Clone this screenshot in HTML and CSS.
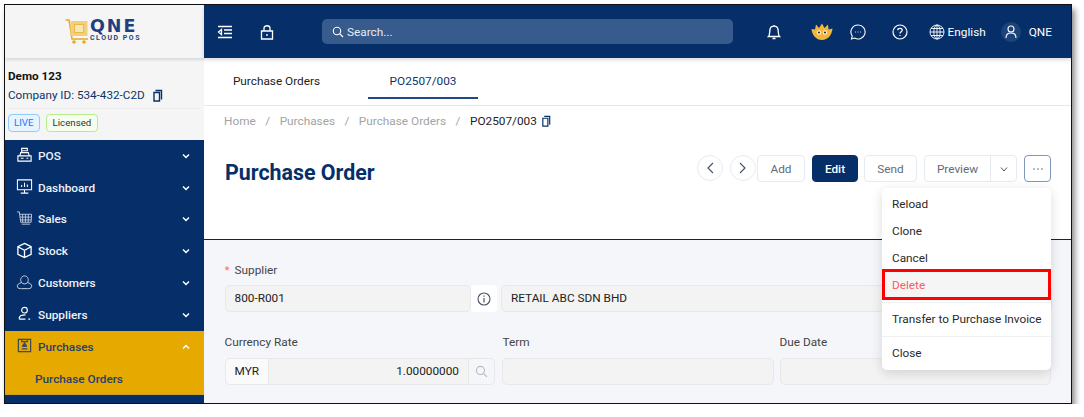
FILE: index.html
```html
<!DOCTYPE html>
<html>
<head>
    <title>Purchase Order</title>
    <link rel="stylesheet" href="styles.css">
</head>
<body>
<div class="frame">
    <div class="sidebar">
        <div class="logo-box">
            <svg class="logo-cart" width="24" height="25" viewBox="0 0 24 25">
                <path d="M0.500 1H4L7 20H23" fill="none" stroke="#e9a91e" stroke-width="1.500"/>
                <rect x="5.500" y="2" width="17" height="15" fill="#f3cf7c"/>
                <rect x="9.500" y="5.500" width="9" height="8" fill="#f9e6b5" stroke="#e9b84a"/>
                <circle cx="9" cy="23" r="1.800" fill="#e9a91e"/>
                <circle cx="19" cy="23" r="1.800" fill="#e9a91e"/>
            </svg>
            <div class="logo-text">
                <div class="logo-qne">QNE</div>
                <div class="logo-sub">CLOUD POS</div>
            </div>
        </div>
        <div class="company">
            <div class="company-name">Demo 123</div>
            <div class="company-id">
                Company ID: 534-432-C2D
                <svg width="12" height="13" viewBox="0 0 12 13"><path d="M3.500 1.500H9.500V10.500M3 3.500H7.500V12H2V3.500Z" fill="none" stroke="#0a3069" stroke-width="1.400"/></svg>
            </div>
            <div class="badges">
                <span class="badge badge-live">LIVE</span>
                <span class="badge badge-lic">Licensed</span>
            </div>
        </div>
        <div class="menu">
            <div class="menu-item">
                <svg class="mi" viewBox="0 0 18 18"><path d="M2 16V10.500H16V16ZM4 10.500L5 7H13L14 10.500M6 7V2.500H12V5H6M5 13H8M11 13H13" fill="none" stroke="#fff" stroke-width="1.200"/></svg>
                <span>POS</span>
                <svg class="chev" viewBox="0 0 10 10"><path d="M2 3.500L5 6.500L8 3.500" fill="none" stroke="#fff" stroke-width="1.500"/></svg>
            </div>
            <div class="menu-item">
                <svg class="mi" viewBox="0 0 18 18"><path d="M1.500 2H16.500V12.500H1.500ZM9 12.500V16M5 16H13M6 9.500V7.500M9 9.500V5M12 9.500V7" fill="none" stroke="#fff" stroke-width="1.100"/></svg>
                <span>Dashboard</span>
                <svg class="chev" viewBox="0 0 10 10"><path d="M2 3.500L5 6.500L8 3.500" fill="none" stroke="#fff" stroke-width="1.500"/></svg>
            </div>
            <div class="menu-item">
                <svg class="mi" viewBox="0 0 18 18"><path d="M1 2H3.500L5 13H16L16.500 4.500H3.800M7 4.500V13M10 4.500V13M13 4.500V13M4.200 7.500H16.300M4.600 10.500H16.200M6 15H15" fill="none" stroke="#cfd8e6" stroke-width="0.900"/></svg>
                <span>Sales</span>
                <svg class="chev" viewBox="0 0 10 10"><path d="M2 3.500L5 6.500L8 3.500" fill="none" stroke="#fff" stroke-width="1.500"/></svg>
            </div>
            <div class="menu-item">
                <svg class="mi" viewBox="0 0 18 18"><path d="M9 1.500L16 5V13L9 16.500L2 13V5ZM2 5L9 8.800L16 5M9 8.800V16.500" fill="none" stroke="#fff" stroke-width="1.400"/></svg>
                <span>Stock</span>
                <svg class="chev" viewBox="0 0 10 10"><path d="M2 3.500L5 6.500L8 3.500" fill="none" stroke="#fff" stroke-width="1.500"/></svg>
            </div>
            <div class="menu-item">
                <svg class="mi" viewBox="0 0 18 18"><path d="M6 9C4 7 5 2 9 2S14 7 12 9M6 9C3 10 1 11 1.500 13.500C2 15.500 4 15.500 6 15.500H12C14 15.500 16 15.500 16.500 13.500C17 11 15 10 12 9M6 9C7 11 11 11 12 9" fill="none" stroke="#cfd8e6" stroke-width="1"/></svg>
                <span>Customers</span>
                <svg class="chev" viewBox="0 0 10 10"><path d="M2 3.500L5 6.500L8 3.500" fill="none" stroke="#fff" stroke-width="1.500"/></svg>
            </div>
            <div class="menu-item">
                <svg class="mi" viewBox="0 0 18 18"><circle cx="9" cy="5.500" r="3" fill="none" stroke="#fff" stroke-width="1.200"/><path d="M3.500 15V13.500C4 11.500 7 10.500 10 10.500M3.500 15H10M13 15H15" fill="none" stroke="#fff" stroke-width="1.200"/></svg>
                <span>Suppliers</span>
                <svg class="chev" viewBox="0 0 10 10"><path d="M2 3.500L5 6.500L8 3.500" fill="none" stroke="#fff" stroke-width="1.500"/></svg>
            </div>
            <div class="menu-open">
                <div class="menu-item menu-item-open">
                    <svg class="mi" viewBox="0 0 18 18"><path d="M2.500 2.500H15.500V15.500H2.500ZM6 2.500V5H12V2.500M6 12.500H12M6.500 10H11.500M9 6.500L7.500 8.500H10.500Z" fill="none" stroke="#3d4a5c" stroke-width="1.300"/></svg>
                    <span>Purchases</span>
                    <svg class="chev" viewBox="0 0 10 10"><path d="M2 6.500L5 3.500L8 6.500" fill="none" stroke="#fff" stroke-width="1.500"/></svg>
                </div>
                <div class="submenu-item">Purchase Orders</div>
            </div>
        </div>
    </div>

    <div class="main">
        <div class="topbar">
            <svg width="16" height="16" viewBox="0 0 16 16"><path d="M1 2.500H15M7 6H15M7 9.500H15M1 13.500H15M4.500 5.500L1.500 8L4.500 10.500Z" fill="none" stroke="#fff" stroke-width="1.300"/></svg>
            <svg class="lock" width="16" height="16" viewBox="0 0 16 16"><path d="M2.500 7H13.500V15H2.500ZM5 7V4C5 1 11 1 11 4V7M8 10V12" fill="none" stroke="#fff" stroke-width="1.300"/></svg>
            <div class="search">
                <svg width="12" height="12" viewBox="0 0 12 12"><circle cx="5" cy="5" r="3.700" fill="none" stroke="#fff" stroke-width="1.100"/><path d="M8 8L11 11" stroke="#fff" stroke-width="1.100"/></svg>
                <span>Search...</span>
            </div>
            <div class="top-right">
                <svg class="t-bell" width="14" height="16" viewBox="0 0 14 16"><path d="M1.500 12.500C3 11 2.500 8 3 5.500C3.500 1 10.500 1 11 5.500C11.500 8 11 11 12.500 12.500ZM5.500 14.500H8.500M7 1V2" fill="none" stroke="#fff" stroke-width="1.300"/></svg>
                <svg class="t-crown" width="22" height="18" viewBox="0 0 22 18"><path d="M0.500 6L4 6.500L5 1.500L8 5L11 0.500L13.500 5L17 1.500L17.500 6.500L21.500 5.500C21 12 17 17 11 17C5 17 1 12 0.500 6Z" fill="#f4b63a"/><circle cx="8" cy="9.500" r="2.200" fill="#fff2c8"/><circle cx="14" cy="9.500" r="2.200" fill="#fff2c8"/><circle cx="8" cy="9.500" r="1.100" fill="#333"/><circle cx="14" cy="9.500" r="1.100" fill="#333"/></svg>
                <svg class="t-chat" width="16" height="16" viewBox="0 0 16 16"><path d="M8 1A7 7 0 1 1 4.500 14L1.500 15L2.200 12A7 7 0 0 1 8 1Z" fill="none" stroke="#fff" stroke-width="1.100"/><path d="M5 8H5.800M7.600 8H8.400M10.200 8H11" stroke="#fff" stroke-width="1.100"/></svg>
                <svg class="t-help" width="16" height="16" viewBox="0 0 16 16"><circle cx="8" cy="8" r="7" fill="none" stroke="#fff" stroke-width="1.200"/><path d="M5.800 6.200C5.800 3.800 10.200 3.800 10.200 6.200C10.200 7.800 8 7.800 8 9.500M8 11V12" fill="none" stroke="#fff" stroke-width="1.200"/></svg>
                <div class="lang">
                    <svg width="16" height="16" viewBox="0 0 16 16"><g fill="none" stroke="#fff" stroke-width="0.900"><circle cx="8" cy="8" r="7"/><ellipse cx="8" cy="8" rx="3.200" ry="7"/><path d="M8 1V15M1 8H15M2 4.500H14M2 11.500H14"/></g></svg>
                    <span>English</span>
                </div>
                <div class="user">
                    <div class="avatar"><svg width="12" height="14" viewBox="0 0 12 14"><circle cx="6" cy="4" r="3" fill="none" stroke="#fff" stroke-width="1.100"/><path d="M1 13C1 9 3 8 6 8S11 9 11 13" fill="none" stroke="#fff" stroke-width="1.100"/></svg></div>
                    <span>QNE</span>
                </div>
            </div>
        </div>

        <div class="tabs">
            <div class="tab">Purchase Orders</div>
            <div class="tab tab-active">PO2507/003</div>
        </div>

        <div class="crumbs">
            <span>Home</span><i>/</i><span>Purchases</span><i>/</i><span>Purchase Orders</span><i>/</i><b>PO2507/003</b>
            <svg width="11" height="12" viewBox="0 0 12 13"><path d="M3.500 1.500H9.500V10.500M3 3.500H7.500V12H2V3.500Z" fill="none" stroke="#0a3069" stroke-width="1.300"/></svg>
        </div>

        <div class="title-row">
            <h1>Purchase Order</h1>
            <div class="actions">
                <div class="round-btn"><svg width="10" height="14" viewBox="0 0 10 14"><path d="M8 2L3 7L8 12" fill="none" stroke="#4a5568" stroke-width="1.200"/></svg></div>
                <div class="round-btn"><svg width="10" height="14" viewBox="0 0 10 14"><path d="M2 2L7 7L2 12" fill="none" stroke="#4a5568" stroke-width="1.200"/></svg></div>
                <div class="btn btn-add">Add</div>
                <div class="btn btn-edit">Edit</div>
                <div class="btn btn-send">Send</div>
                <div class="split">
                    <div class="split-main">Preview</div>
                    <div class="split-arrow"><svg width="10" height="10" viewBox="0 0 10 10"><path d="M2 3.500L5 7L8 3.500" fill="none" stroke="#4a5568" stroke-width="1"/></svg></div>
                </div>
                <div class="more"><svg width="12" height="4" viewBox="0 0 12 4"><circle cx="2" cy="2" r="0.800" fill="#616b7a"/><circle cx="6" cy="2" r="0.800" fill="#616b7a"/><circle cx="10" cy="2" r="0.800" fill="#616b7a"/></svg></div>
            </div>
        </div>

        <div class="form">
            <div class="field-label"><em>*</em> Supplier</div>
            <div class="row-supplier">
                <div class="input code">800-R001</div>
                <div class="info-btn"><svg width="14" height="14" viewBox="0 0 14 14"><circle cx="7" cy="7" r="6" fill="none" stroke="#4a5568" stroke-width="1.100"/><path d="M7 6V10.500M7 3.500V4.800" stroke="#4a5568" stroke-width="1.200"/></svg></div>
                <div class="input name">RETAIL ABC SDN BHD</div>
            </div>
            <div class="row-labels">
                <div class="lab-rate">Currency Rate</div>
                <div class="lab-term">Term</div>
                <div class="lab-due">Due Date</div>
            </div>
            <div class="row-rate">
                <div class="rate-group">
                    <div class="cur">MYR</div>
                    <div class="rate">1.00000000</div>
                    <div class="rate-search"><svg width="13" height="13" viewBox="0 0 12 12"><circle cx="5" cy="5" r="3.700" fill="none" stroke="#b5b9c0" stroke-width="1"/><path d="M8 8L11 11" stroke="#b5b9c0" stroke-width="1"/></svg></div>
                </div>
                <div class="input term"></div>
                <div class="input due"></div>
            </div>
        </div>

        <div class="dropdown">
            <div class="dd-item">Reload</div>
            <div class="dd-item">Clone</div>
            <div class="dd-item">Cancel</div>
            <div class="dd-item dd-delete">Delete</div>
            <div class="dd-sep"></div>
            <div class="dd-item dd-transfer">Transfer to Purchase Invoice</div>
            <div class="dd-sep"></div>
            <div class="dd-item dd-close">Close</div>
        </div>
    </div>
</div>
</body>
</html>
```

FILE: styles.css
```css
html, body {
    margin: 0;
    padding: 0;
    background: #fff;
    overflow: hidden;
}

body {
    padding: 4px 0 0 4px;
    font-family: Roboto, "Liberation Sans", sans-serif;
}

.frame {
    width: 1066px;
    height: 398px;
    border: 1.500px solid #111;
    box-shadow: 3px 5px 6px rgba(0, 0, 0, 0.45);
    display: flex;
    overflow: hidden;
    background: #fff;
}

/* sidebar */
.sidebar {
    width: 199px;
    flex-shrink: 0;
    background: #f5f5f5;
    display: flex;
    flex-direction: column;
}

.logo-box {
    height: 53px;
    display: flex;
    align-items: center;
    justify-content: center;
    gap: 1px;
    padding-right: 3px;
    box-shadow: 0 2px 3px rgba(0, 0, 0, 0.12);
}

.logo-text {
    display: flex;
    flex-direction: column;
    gap: 2px;
    padding-bottom: 2px;
    color: #1f3f7f;
}

.logo-qne {
    font-family: "DejaVu Sans", sans-serif;
    font-size: 17.500px;
    font-weight: 700;
    line-height: 13px;
    letter-spacing: 2px;
}

.logo-sub {
    font-size: 7px;
    font-weight: 700;
    line-height: 6px;
    letter-spacing: 1.500px;
    white-space: nowrap;
}

.company {
    height: 82px;
    padding: 11px 5px 0 3px;
    box-sizing: border-box;
}

.company-name {
    font-size: 11.700px;
    font-weight: 700;
    color: #111;
    line-height: 15px;
}

.company-id {
    margin-top: 3px;
    font-size: 11.700px;
    color: #0d3369;
    line-height: 17px;
    padding-bottom: 4px;
    border-bottom: 1px solid #ebebeb;
    display: flex;
    align-items: center;
    gap: 7px;
}

.badges {
    margin-top: 5px;
    display: flex;
    gap: 6px;
}

.badge {
    font-size: 9.700px;
    line-height: 16px;
    padding: 0 5px;
    border-radius: 4px;
}

.badge-live {
    color: #1677ff;
    background: #e6f4ff;
    border: 1px solid #91caff;
}

.badge-lic {
    color: #333;
    background: #f6ffed;
    border: 1px solid #b7eb8f;
    padding: 0 6px;
}

.menu {
    flex: 1;
    background: #062f69;
    color: #fff;
}

.menu-item {
    height: 31.800px;
    display: flex;
    align-items: center;
    padding: 0 13px 0 11px;
    font-size: 11.800px;
    font-weight: 500;
    color: #eef2f8;
}

.menu-item span {
    margin-left: 5px;
    flex: 1;
}

.mi {
    width: 17px;
    height: 17px;
    flex-shrink: 0;
    margin-top: -2px;
}

.chev {
    width: 10px;
    height: 10px;
}

.menu-open {
    background: #e5a900;
    border-bottom: 1px solid #caa02a;
}

.menu-item-open {
    color: #1f3f73;
}

.submenu-item {
    height: 31px;
    line-height: 32px;
    padding-left: 30px;
    font-size: 11.800px;
    font-weight: 500;
    color: #1f3f73;
}

/* main area */
.main {
    flex: 1;
    position: relative;
    display: flex;
    flex-direction: column;
    min-width: 0;
}

.topbar {
    height: 53px;
    flex-shrink: 0;
    background: #062f69;
    display: flex;
    align-items: center;
    padding: 0 19px 0 13px;
    color: #fff;
    box-shadow: 0 2px 4px rgba(0, 0, 0, 0.15);
}

.lock {
    margin-left: 26px;
}

.search {
    margin-left: 47px;
    width: 411px;
    height: 25px;
    box-sizing: border-box;
    background: #375b8d;
    border-radius: 5px;
    display: flex;
    align-items: center;
    padding-left: 10px;
    gap: 3px;
    font-size: 11.800px;
    color: #e6ebf3;
}

.top-right {
    margin-left: auto;
    display: flex;
    align-items: center;
    font-size: 11.800px;
}

.t-crown {
    margin-left: 30px;
}

.t-chat {
    margin-left: 17px;
}

.t-help {
    margin-left: 26px;
}

.lang {
    display: flex;
    align-items: center;
    gap: 3px;
    margin-left: 21px;
}

.user {
    display: flex;
    align-items: center;
    gap: 8px;
    margin-left: 15px;
}

.avatar {
    width: 20px;
    height: 20px;
    border-radius: 50%;
    background: #1d4479;
    display: flex;
    align-items: center;
    justify-content: center;
}

.tabs {
    height: 48px;
    flex-shrink: 0;
    display: flex;
    padding-left: 2px;
    border-bottom: 1px solid #e6e8ec;
    box-sizing: border-box;
    font-size: 11.800px;
}

.tab {
    width: 141px;
    text-align: center;
    line-height: 46px;
    color: #222;
}

.tab-active {
    width: 110px;
    margin-left: 21px;
    color: #0d3369;
    height: 41px;
    box-sizing: border-box;
    border-bottom: 2px solid #1f4a85;
}

.crumbs {
    margin-top: 7px;
    padding-left: 20px;
    display: flex;
    align-items: center;
    font-size: 11.800px;
    line-height: 16px;
    color: #a3a3a3;
}

.crumbs i {
    font-style: normal;
    margin: 0 9.500px;
}

.crumbs b {
    font-weight: 400;
    color: #222;
    margin-right: 4px;
}

.title-row {
    height: 111px;
    flex-shrink: 0;
    padding: 26px 20px 0 21px;
    box-sizing: border-box;
    display: flex;
    border-bottom: 1.500px solid #222;
}

h1 {
    margin: 5px 0 0 0;
    font-size: 21.400px;
    font-weight: 700;
    color: #062f69;
    line-height: 26px;
}

.actions {
    margin-left: auto;
    display: flex;
    gap: 7px;
    height: 27px;
    font-size: 11.800px;
}

.round-btn {
    width: 26px;
    height: 26px;
    box-sizing: border-box;
    border: 1px solid #e7ebf1;
    border-radius: 50%;
    display: flex;
    align-items: center;
    justify-content: center;
}

.btn {
    height: 27px;
    line-height: 27px;
    box-sizing: border-box;
    border: 1px solid #e7ebf1;
    border-radius: 4px;
    color: #616b7a;
    text-align: center;
}

.btn-add {
    width: 48px;
    margin-left: -6px;
}

.btn-edit {
    width: 46px;
    margin-right: -1px;
    background: #062f69;
    border-color: #062f69;
    color: #fff;
    font-weight: 500;
}

.btn-send {
    width: 53px;
}

.split {
    display: flex;
    border: 1px solid #e7ebf1;
    border-radius: 4px;
    height: 27px;
    box-sizing: border-box;
    line-height: 27px;
    color: #616b7a;
}

.split-main {
    width: 65px;
    text-align: center;
    border-right: 1px solid #e7ebf1;
}

.split-arrow {
    width: 25px;
    display: flex;
    align-items: center;
    justify-content: center;
}

.more {
    width: 27px;
    height: 27px;
    box-sizing: border-box;
    border: 1px solid #7f98ba;
    border-radius: 4px;
    display: flex;
    align-items: center;
    justify-content: center;
}

.form {
    flex: 1;
    background: #f5f6fa;
    padding: 22px 19px 0 20.500px;
    font-size: 11.800px;
    color: #333;
}

.field-label {
    line-height: 16px;
    color: #444;
}

.field-label em {
    font-style: normal;
    color: #ff6b6b;
    margin-right: 2px;
}

.row-supplier {
    margin-top: 7px;
    display: flex;
    height: 27px;
}

.input {
    height: 27px;
    box-sizing: border-box;
    background: #f3f3f3;
    border: 1px solid #e8e8e8;
    border-radius: 5px;
    line-height: 25px;
    padding-left: 9px;
    color: #222;
}

.code {
    width: 246.500px;
}

.info-btn {
    width: 26px;
    height: 27px;
    background: #fff;
    border-radius: 4px;
    display: flex;
    align-items: center;
    justify-content: center;
}

.name {
    flex: 1;
    margin-left: 4px;
}

.row-labels {
    margin-top: 22px;
    display: flex;
    line-height: 16px;
    color: #444;
}

.lab-rate {
    width: 278px;
}

.lab-term {
    width: 277px;
}

.row-rate {
    margin-top: 8px;
    display: flex;
}

.rate-group {
    width: 270.500px;
    display: flex;
    height: 27px;
    box-sizing: border-box;
}

.cur {
    width: 44px;
    box-sizing: border-box;
    background: #fafafa;
    border: 1px solid #e8e8e8;
    border-radius: 5px 0 0 5px;
    padding-left: 9px;
    line-height: 25px;
    color: #222;
}

.rate {
    flex: 1;
    background: #f3f3f3;
    border: 1px solid #e8e8e8;
    border-left: 0;
    text-align: right;
    padding-right: 9px;
    line-height: 25px;
    color: #222;
}

.rate-search {
    width: 26px;
    box-sizing: border-box;
    border: 1px solid #e8e8e8;
    border-left: 0;
    border-radius: 0 5px 5px 0;
    display: flex;
    align-items: center;
    justify-content: center;
}

.term {
    width: 272px;
    margin-left: 7px;
}

.due {
    width: 271px;
    margin-left: 6px;
}

/* the menu opened by the ... button */
.dropdown {
    position: absolute;
    right: 20px;
    top: 183px;
    width: 169px;
    height: 182px;
    background: #fff;
    border-radius: 5px;
    box-shadow: 0 3px 12px rgba(0, 0, 0, 0.14);
    font-size: 11.800px;
    color: #2a2a2a;
}

.dd-item {
    height: 27px;
    line-height: 27px;
    padding-left: 10px;
}

.dd-item:first-child {
    margin-top: 3px;
}

.dd-delete {
    color: #ff5a5f;
    background: #f5f5f5;
    outline: 3px solid #f00;
    outline-offset: -3px;
    height: 31px;
    box-sizing: border-box;
    margin-top: -3px;
    padding-top: 3px;
}

.dd-transfer {
    height: 29px;
    line-height: 29px;
}

.dd-close {
    line-height: 29px;
}

.dd-sep {
    height: 1px;
    margin: 2px 0;
    background: #f0f0f0;
}
```
